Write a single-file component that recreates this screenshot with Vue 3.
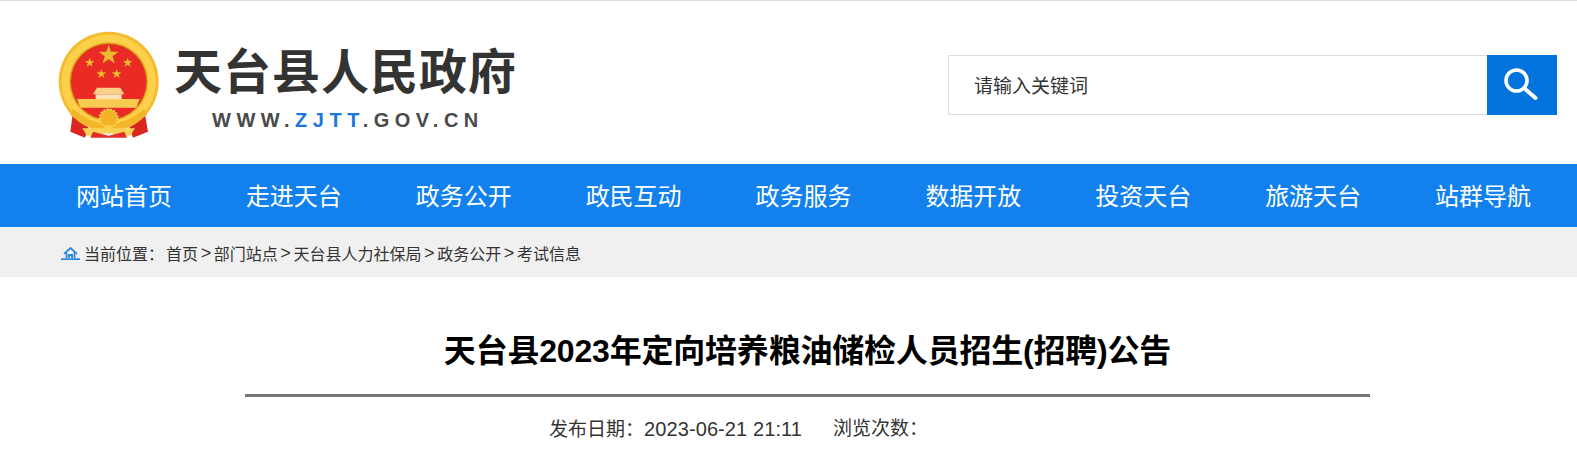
<template>
  <div class="page">
    <header class="top">
      <div class="logo">
        <svg class="emblem" width="101" height="110" viewBox="55 48 303 330">
          <path d="M102 275 L92 350 L136 368 L150 320 Z" fill="#d9261f" />
          <path d="M312 275 L325 350 L280 368 L264 320 Z" fill="#d9261f" />
          <circle cx="207" cy="200" r="150" fill="#f6bc2f" />
          <circle cx="207" cy="200" r="130" fill="none" stroke="#fbd04a" stroke-width="22" />
          <circle cx="207" cy="200" r="116" fill="#c98b14" />
          <circle cx="207" cy="200" r="113" fill="#ea2a25" />
          <polygon v-for="(s, i) in stars" :key="i" :points="s" fill="#eeb92c" />
          <path d="M172 218 H242 L254 238 H160 Z" fill="#f8d08a" />
          <rect x="168" y="238" width="78" height="14" fill="#fbe3b5" />
          <path d="M112 252 H300 L290 278 H122 Z" fill="#f7cb52" />
          <path d="M100 282 Q207 372 314 282 L322 300 Q207 392 92 300 Z" fill="#f3b52a" />
          <path d="M128 340 H286 L272 362 H240 L207 352 L174 362 H142 Z" fill="#f8d257" />
          <path d="M160 350 L207 362 L254 350 L262 368 H152 Z" fill="#e42e27" />
          <circle cx="207" cy="310" r="27" fill="#f2b226" stroke="#f9d35c" stroke-width="6" stroke-dasharray="6 4" />
          <circle cx="207" cy="343" r="13" fill="#f9cf4d" />
        </svg>
        <div class="logo-text">
          <div class="site-name">天台县人民政府</div>
          <div class="site-url">WWW.<span class="blue">ZJTT</span>.GOV.CN</div>
        </div>
      </div>
      <div class="search">
        <div class="search-input">请输入关键词</div>
        <div class="search-btn">
          <svg width="36" height="36" viewBox="0 0 36 36" fill="none" stroke="#fff">
            <circle cx="12.5" cy="13.5" r="10.5" stroke-width="3.6" />
            <path d="M20.5 21.5 L31.5 31" stroke-width="4" stroke-linecap="round" />
          </svg>
        </div>
      </div>
    </header>

    <nav class="nav">
      <a v-for="item in navItems" :key="item">{{ item }}</a>
    </nav>

    <div class="crumb">
      <svg class="home" width="19" height="13" viewBox="0 0 19 13" fill="none" stroke="#2a85dd" stroke-width="1.8">
        <path d="M3 6.8 L9.5 1 L16 6.8" />
        <path d="M5.5 5.5 V11 M13.5 5.5 V11 M8 11 V8 H11 V11" />
        <path d="M0 12.2 H19" />
      </svg>
      <span class="here">当前位置：</span><span>首页</span><i>&gt;</i><span>部门站点</span><i>&gt;</i><span>天台县人力社保局</span><i>&gt;</i><span>政务公开</span><i>&gt;</i><span>考试信息</span>
    </div>

    <main class="article">
      <h1>天台县2023年定向培养粮油储检人员招生(招聘)公告</h1>
      <div class="meta">
        <span>发布日期：<span class="date">2023-06-21 21:11</span></span>
        <span>浏览次数：</span>
      </div>
    </main>
  </div>
</template>

<script setup>
const navItems = ['网站首页', '走进天台', '政务公开', '政民互动', '政务服务', '数据开放', '投资天台', '旅游天台', '站群导航']

// five stars of the emblem: [cx, cy, outer radius]
const starSpots = [[207, 120, 31], [150, 143, 15], [264, 143, 15], [185, 177, 15], [231, 177, 15]]
const stars = starSpots.map(([cx, cy, r]) => {
  const pts = []
  for (let i = 0; i < 10; i++) {
    const rad = i % 2 ? r * 0.4 : r
    const a = -Math.PI / 2 + (i * Math.PI) / 5
    pts.push((cx + rad * Math.cos(a)).toFixed(1) + ',' + (cy + rad * Math.sin(a)).toFixed(1))
  }
  return pts.join(' ')
})
</script>

<style>
html, body {
  margin: 0;
  background: #fff;
}
</style>

<style scoped>
.page {
  width: 1577px;
  height: 460px;
  overflow: hidden;
  font-family: "Liberation Sans", "Noto Sans CJK SC", sans-serif;
  color: #333;
}

.top {
  height: 164px;
  box-sizing: border-box;
  border-top: 1px solid #ddd;
  display: flex;
  justify-content: space-between;
  align-items: flex-start;
  padding: 30px 20px 0 58px;
}

.logo {
  display: flex;
}

.logo-text {
  margin-left: 15px;
  padding-top: 13px;
}

.site-name {
  font-size: 48px;
  line-height: 58px;
  font-weight: 700;
  letter-spacing: 1px;
  color: #333;
  white-space: nowrap;
}

.site-url {
  margin-top: 6px;
  margin-left: 38px;
  font-size: 20px;
  line-height: 24px;
  font-weight: 700;
  letter-spacing: 5.5px;
  color: #4a4a4a;
}

.blue {
  color: #1a78dc;
}

.search {
  display: flex;
  margin-top: 24px;
  height: 60px;
}

.search-input {
  width: 539px;
  box-sizing: border-box;
  border: 1px solid #ddd;
  border-right: none;
  padding-left: 25px;
  font-size: 19px;
  line-height: 61px;
  color: #333;
}

.search-btn {
  width: 70px;
  background: #0073dc;
  display: flex;
  align-items: center;
  justify-content: center;
}

.nav {
  height: 63px;
  background: #1281ee;
  display: flex;
  justify-content: space-between;
  padding: 0 46px 0 76px;
}

.nav a {
  font-size: 24px;
  line-height: 65px;
  color: #fff;
}

.crumb {
  height: 50px;
  box-sizing: border-box;
  padding: 2px 0 0 61px;
  background: #f0f0f0;
  display: flex;
  align-items: center;
  font-size: 16px;
  color: #333;
}

.home {
  margin-right: 4px;
}

.here {
  margin-right: 2px;
}

.crumb i {
  font-style: normal;
  font-size: 18px;
  margin: 0 2.6px;
}

.article {
  width: 1125px;
  margin-left: 245px;
}

.article h1 {
  margin: 0;
  padding-top: 51px;
  height: 66px;
  line-height: 46px;
  font-size: 32px;
  font-weight: 700;
  letter-spacing: -0.2px;
  text-align: center;
  color: #000;
  border-bottom: 3px solid #777;
}

.meta {
  margin-top: 17px;
  padding-left: 304px;
  display: flex;
  gap: 31px;
  font-size: 19px;
  line-height: 30px;
  color: #333;
}

.date {
  font-size: 20px;
  letter-spacing: 0.1px;
}
</style>
